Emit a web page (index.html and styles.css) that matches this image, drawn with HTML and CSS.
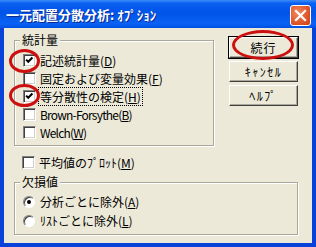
FILE: index.html
```html
<!DOCTYPE html>
<html lang="ja">
<head>
    <meta charset="UTF-8">
    <title>一元配置分散分析: ｵﾌﾟｼｮﾝ</title>
    <link rel="stylesheet" href="styles.css">
</head>
<body>
    <div class="window">
        <div class="titlebar">
            <span class="title">一元配置分散分析: ｵﾌﾟｼｮﾝ</span>
            <span class="close">
                <svg viewBox="0 0 21 21" width="21" height="21">
                    <path d="M6 6 L15 15 M15 6 L6 15" stroke="#fff" stroke-width="2.2" stroke-linecap="square"/>
                </svg>
            </span>
        </div>

        <div class="client">
            <div class="top">
                <fieldset class="group stats">
                    <legend>統計量</legend>
                    <div class="row">
                        <span class="box"><svg viewBox="0 0 13 13"><polyline points="2.5,5.5 5,8 10,3"/></svg></span>
                        <span>記述統計量(<u>D</u>)</span>
                    </div>
                    <div class="row">
                        <span class="box"></span>
                        <span>固定および変量効果(<u>F</u>)</span>
                    </div>
                    <div class="row">
                        <span class="box"><svg viewBox="0 0 13 13"><polyline points="2.5,5.5 5,8 10,3"/></svg></span>
                        <span class="focus">等分散性の検定(<u>H</u>)</span>
                    </div>
                    <div class="row">
                        <span class="box"></span>
                        <span class="latin">Brown-Forsythe(<u>B</u>)</span>
                    </div>
                    <div class="row">
                        <span class="box"></span>
                        <span class="latin">Welch(<u>W</u>)</span>
                    </div>
                </fieldset>

                <div class="buttons">
                    <button class="btn btn-default">続行</button>
                    <button class="btn">ｷｬﾝｾﾙ</button>
                    <button class="btn">ﾍﾙﾌﾟ</button>
                </div>
            </div>

            <div class="row plot">
                <span class="box"></span>
                <span>平均値のﾌﾟﾛｯﾄ(<u>M</u>)</span>
            </div>

            <fieldset class="group missing">
                <legend>欠損値</legend>
                <div class="row radio-row">
                    <span class="radio on"></span>
                    <span>分析ごとに除外(<u>A</u>)</span>
                </div>
                <div class="row radio-row">
                    <span class="radio"></span>
                    <span>ﾘｽﾄごとに除外(<u>L</u>)</span>
                </div>
            </fieldset>
        </div>

        <!-- red annotation marks drawn over the dialog -->
        <div class="mark mark-d"></div>
        <div class="mark mark-h"></div>
        <div class="mark mark-ok"></div>
    </div>
</body>
</html>
```

FILE: styles.css
```css
* {
    margin: 0;
    padding: 0;
    box-sizing: border-box;
}

body {
    font-family: "Noto Sans CJK JP", "Noto Sans", sans-serif;
    font-size: 12px;
    color: #000;
    background: #0a3ee0;
}

.window {
    position: relative;
    width: 316px;
    height: 247px;
    display: flex;
    flex-direction: column;
    background: #0842d8;
    overflow: hidden;
}

.titlebar {
    height: 28px;
    display: flex;
    align-items: center;
    justify-content: space-between;
    padding: 0 5px 0 6px;
    background: linear-gradient(to bottom, #3c8cf8 0%, #0a5ef0 12%, #0054e8 45%, #0a62f4 85%, #0050e0 100%);
}

.title {
    color: #fff;
    font-weight: bold;
    font-size: 13px;
    line-height: 16px;
    text-shadow: 1px 1px #0a2a90;
    margin-top: 2px;
}

.close {
    width: 21px;
    height: 21px;
    border: 1px solid #fff;
    border-radius: 3px;
    background: radial-gradient(circle at 35% 35%, #f08a62 0%, #e0552a 60%, #c8401a 100%);
    display: flex;
    margin-top: 2px;
}

.close svg {
    margin: -1px;
}

.client {
    flex: 1;
    margin: 0 4px 4px;
    background: #ece9d8;
    padding: 0 10px;
    display: flex;
    flex-direction: column;
}

.top {
    display: flex;
    align-items: flex-start;
}

.group {
    border: 1px solid #aca899;
    box-shadow: inset 1px 1px #fff, 1px 1px #fff;
    padding: 0 0 4px 8px;
}

.group legend {
    margin-left: -3px;
    padding: 0 2px;
    line-height: 14px;
    background: #ece9d8;
}

.stats {
    width: 200px;
    margin-top: 5px;
    padding-top: 4px;
}

.missing {
    width: 284px;
    margin-top: 4px;
    padding-top: 3px;
}

.row {
    display: flex;
    align-items: center;
    gap: 4px;
    height: 18px;
    white-space: nowrap;
}

.radio-row {
    height: 19px;
}

.latin {
    letter-spacing: -0.8px;
}

.plot {
    margin-top: 7px;
    padding-left: 8px;
}

.box {
    width: 13px;
    height: 13px;
    flex: none;
    background: #fff;
    border: 1px solid;
    border-color: #808080 #fff #fff #808080;
    box-shadow: inset 1px 1px #404040, inset -1px -1px #d4d0c8;
}

.box svg {
    display: block;
    width: 11px;
    height: 11px;
    fill: none;
    stroke: #000;
    stroke-width: 2.4;
}

.radio {
    width: 12px;
    height: 12px;
    flex: none;
    margin-right: 1px;
    border-radius: 50%;
    background: #fff;
    border: 1px solid;
    border-color: #808080 #fff #fff #808080;
    box-shadow: inset 1px 1px #404040;
    display: flex;
    align-items: center;
    justify-content: center;
}

.radio.on::after {
    content: "";
    width: 4px;
    height: 4px;
    border-radius: 50%;
    background: #000;
}

.focus {
    outline: 1px dotted #000;
    outline-offset: 0;
    padding: 0 1px;
    margin-left: -1px;
}

.buttons {
    display: flex;
    flex-direction: column;
    gap: 3px;
    margin: 9px 0 0 15px;
}

.btn {
    width: 69px;
    height: 21px;
    font: inherit;
    letter-spacing: 1.5px;
    background: #ece9d8;
    border: 1px solid;
    border-color: #fff #404040 #404040 #fff;
    box-shadow: inset -1px -1px #aca899;
}

.btn-default {
    outline: 1px solid #000;
    outline-offset: 0;
    letter-spacing: 1px;
}

.mark {
    position: absolute;
    border: 3px solid #cc1010;
    border-radius: 50%;
}

.mark-d {
    left: 9px;
    top: 49px;
    width: 31px;
    height: 24px;
}

.mark-h {
    left: 9px;
    top: 84px;
    width: 31px;
    height: 23px;
}

.mark-ok {
    left: 232px;
    top: 30px;
    width: 62px;
    height: 30px;
}
```
